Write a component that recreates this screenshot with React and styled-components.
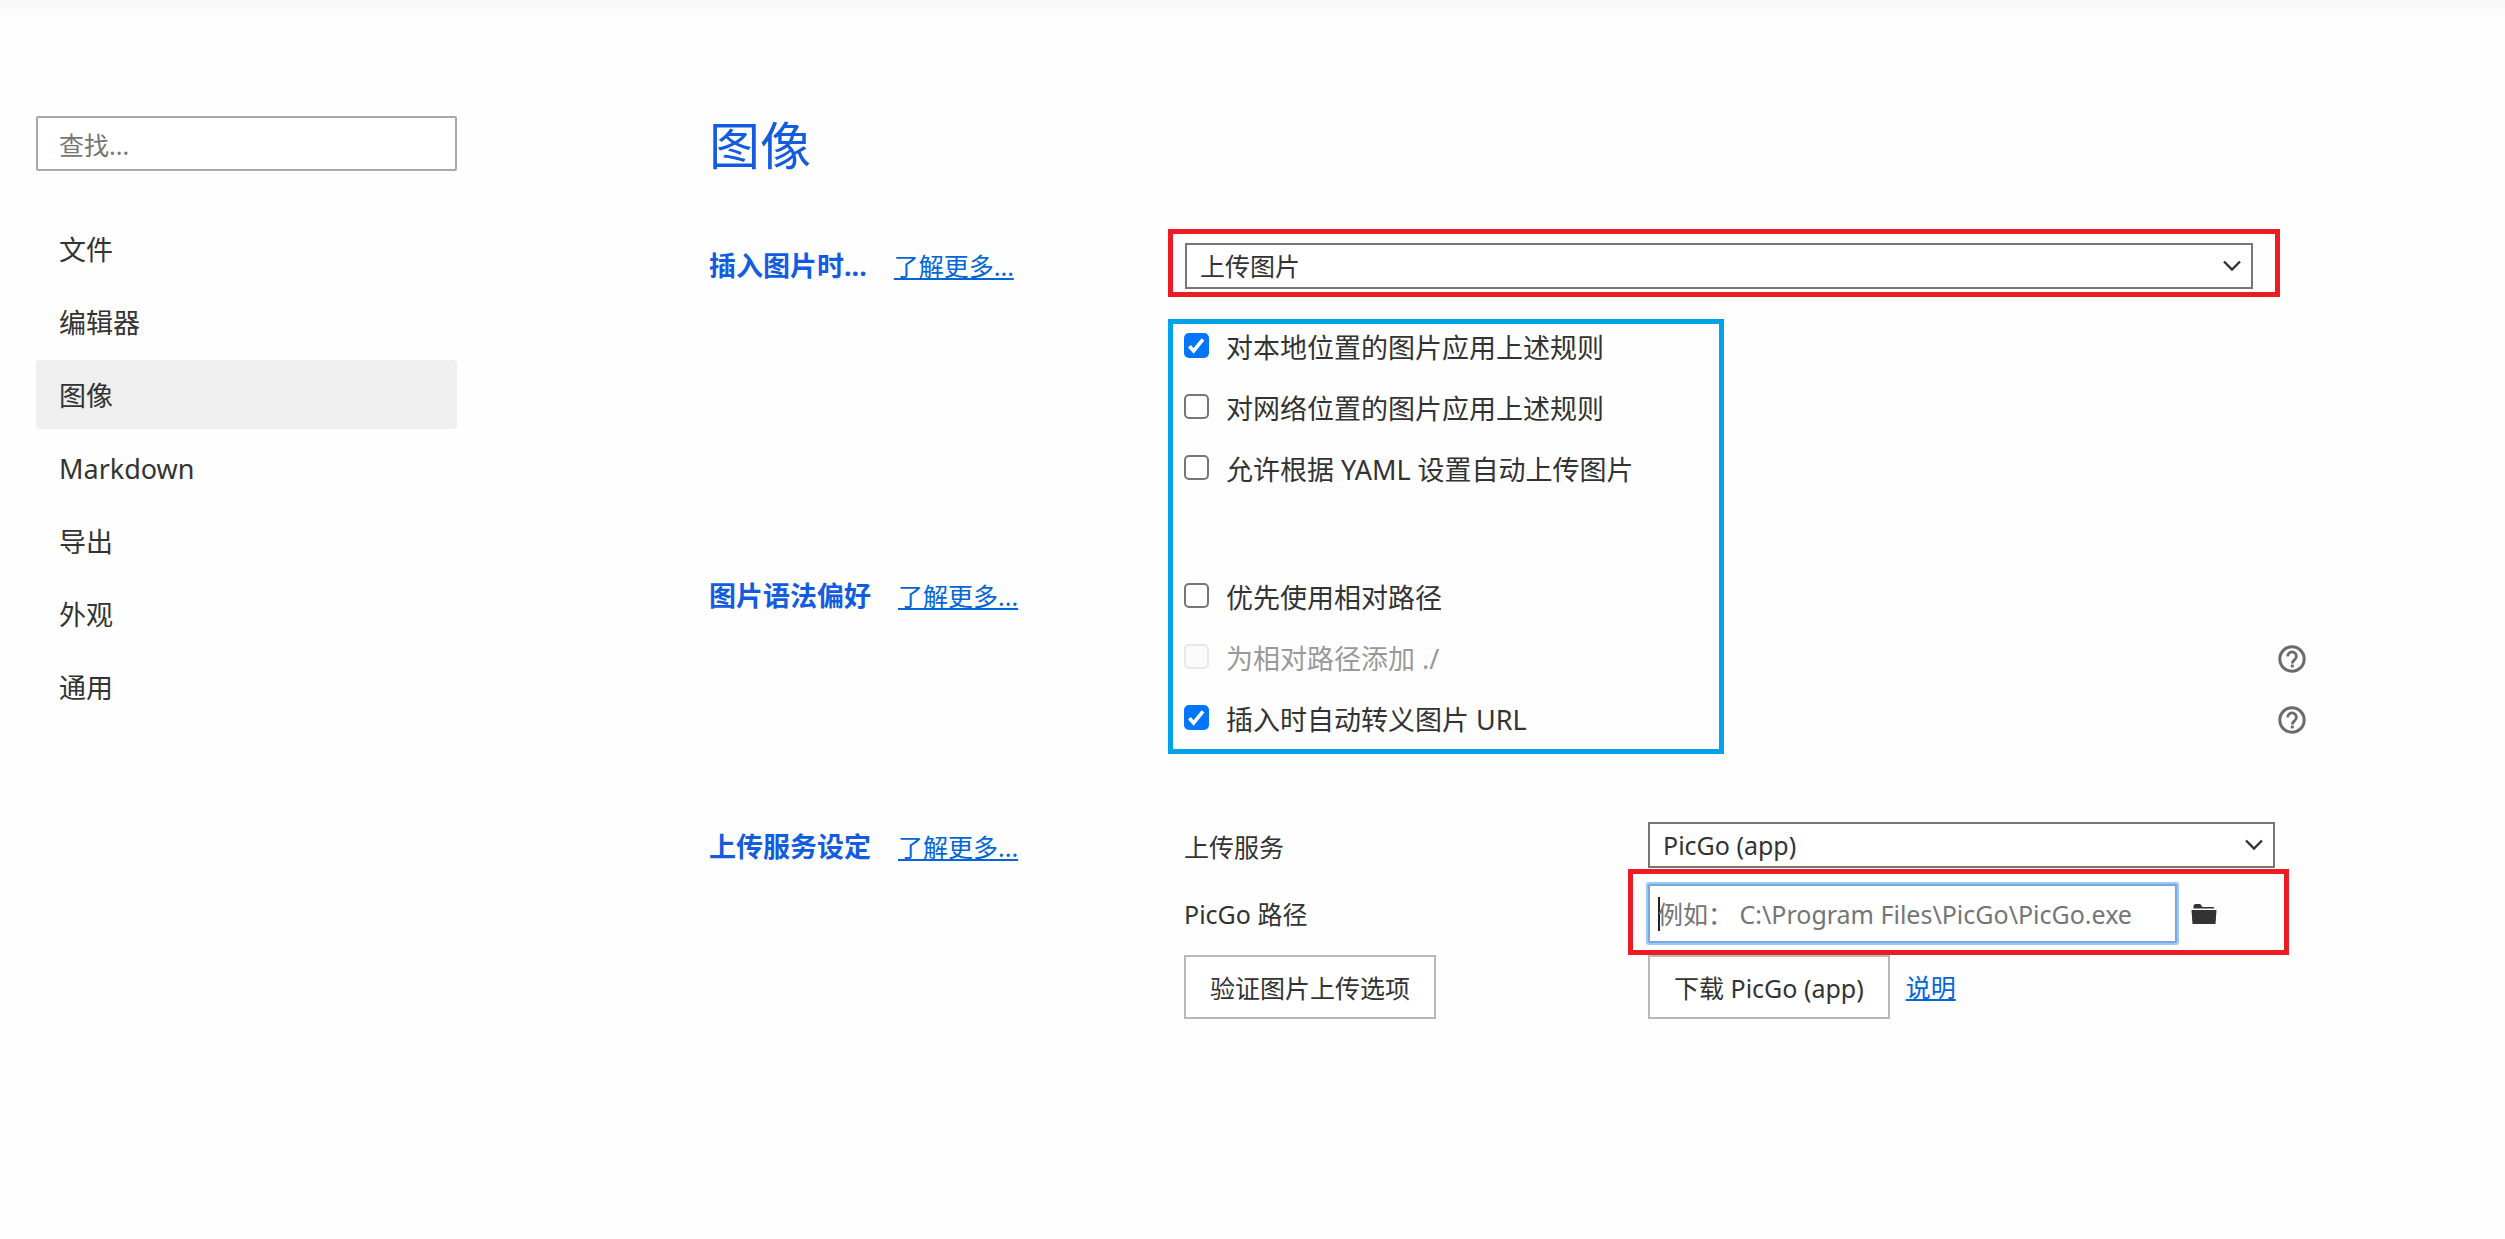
import React, { useState } from 'react';
import styled, { createGlobalStyle } from 'styled-components';

const GlobalStyle = createGlobalStyle`
  * {
    box-sizing: border-box;
  }
  body {
    margin: 0;
    background: #fefefe;
    color: #333;
    font-family: "Noto Sans", "Noto Sans CJK SC", sans-serif;
    font-size: 25px;
    line-height: 36px;
  }
  button, input, select {
    font: inherit;
    color: inherit;
    margin: 0;
  }
`;

// page layout
const Page = styled.div`
  display: flex;
  align-items: flex-start;
  padding: 0 199px 80px 36px;
  background: linear-gradient(#f8f8f8, #fefefe 24px);
`;
const Sidebar = styled.aside`
  flex: none;
  width: 421px;
  padding-top: 116px;
`;
const Main = styled.main`
  flex: 1;
  min-width: 0;
  margin-left: 252px;
  padding-top: 109px;
`;

// sidebar
const Search = styled.input`
  display: block;
  width: 100%;
  height: 55px;
  padding: 2px 21px 0;
  border: 2px solid #a9a9a9;
  border-radius: 2px;
  background: white;
  &::placeholder {
    color: #757575;
    opacity: 1;
  }
`;
const Nav = styled.nav`
  display: flex;
  flex-direction: column;
  gap: 4px;
  margin-top: 43px;
`;
const NavItem = styled.a`
  height: 69px;
  padding-left: 23px;
  border-radius: 4px;
  background: ${props => (props.$active ? '#efefef' : 'transparent')};
  color: #333;
  font-size: 27px;
  line-height: 71px;
  text-decoration: none;
`;

// settings grid
const Title = styled.h1`
  margin: 0;
  color: #135ce0;
  font-size: 51px;
  font-weight: 400;
  line-height: 72px;
`;
const Settings = styled.div`
  display: grid;
  grid-template-columns: 475px 1fr;
  margin-top: 48px;
`;
const Heading = styled.div`
  display: flex;
  align-items: center;
  gap: 27px;
  grid-column: 1;
  grid-row: ${props => props.$row};
  height: ${props => props.$height};
`;
const HeadingText = styled.h2`
  margin: 0;
  color: #135ce0;
  font-size: 27px;
  font-weight: 700;
`;
const Link = styled.a`
  color: #0366d6;
  text-decoration: underline;
  text-decoration-thickness: 2px;
  text-underline-offset: 2px;
`;
const Cell = styled.div`
  grid-column: 2;
  grid-row: ${props => props.$row};
`;
const Checks = styled(Cell)`
  display: flex;
  flex-direction: column;
  padding: ${props => props.$pad};
`;
const CheckRow = styled.div`
  display: flex;
  align-items: center;
  justify-content: space-between;
  height: 61px;
`;
const CheckLabel = styled.label`
  display: flex;
  align-items: center;
  gap: 17px;
  color: ${props => (props.$off ? '#999' : '#333')};
  font-size: 27px;
`;
const Box = styled.input`
  appearance: none;
  width: 25px;
  height: 25px;
  margin-bottom: 5px;
  border: 2px solid #767676;
  border-radius: 5px;
  background: white;
  &:checked {
    border-color: #0075ff;
    background: #0075ff url("data:image/svg+xml,%3Csvg xmlns='http://www.w3.org/2000/svg' viewBox='0 0 21 21'%3E%3Cpath d='M3.4 11.2 7.6 16 17 4.4' fill='none' stroke='white' stroke-width='3.6'/%3E%3C/svg%3E") center / 21px no-repeat;
  }
  &:disabled {
    border-color: #e8e8e8;
    background: #fafafa;
  }
`;
const Help = styled.button`
  display: flex;
  padding: 0;
  border: 0;
  background: none;
  color: #6b6b6b;
`;

// select with its own arrow drawn over the right end
const SelectWrap = styled.div`
  display: grid;
  align-items: center;
  margin-right: ${props => props.$right};
  & > * {
    grid-area: 1 / 1;
  }
  svg {
    justify-self: end;
    margin-right: 12px;
    pointer-events: none;
  }
`;
const Select = styled.select`
  appearance: none;
  width: 100%;
  height: 46px;
  padding: 0 40px 0 13px;
  border: 2px solid #767676;
  border-radius: 0;
  background: white;
`;

// highlight frames around the important fields
const Frame = styled.div`
  border: 5px solid #ed1c24;
`;
const TopFrame = styled(Frame)`
  height: 68px;
  margin: 0 26px 0 -16px;
  padding: 9px 22px 0 12px;
`;
const BlueFrame = styled.div`
  grid-column: 2;
  grid-row: 2 / 4;
  width: 556px;
  height: 435px;
  margin: 16px 0 0 -16px;
  border: 5px solid #00a2e8;
  pointer-events: none;
`;

// upload service block
const Upload = styled(Cell)`
  display: grid;
  grid-template-columns: 464px 1fr;
  grid-template-rows: 48px 86px 64px;
  align-items: center;
`;
const FieldLabel = styled.label`
  padding-top: 4px;
`;
const PathFrame = styled(Frame)`
  display: flex;
  align-items: center;
  gap: 14px;
  height: 86px;
  margin: 0 17px 0 -20px;
  padding: 3px 67px 0 15px;
`;
const PathInput = styled.input`
  flex: 1;
  min-width: 0;
  height: 59px;
  padding: 0 8px;
  border: 2px solid #7aa7dd;
  outline: 2px solid #99c8ff;
  border-radius: 1px;
  background: white;
  caret-color: transparent;
  &::placeholder {
    color: #757575;
    opacity: 1;
  }
  &:placeholder-shown {
    background: linear-gradient(#222, #222) 8px center / 2px 34px no-repeat white;
  }
  &:not(:placeholder-shown) {
    caret-color: #222;
  }
`;
const IconButton = styled.button`
  display: flex;
  padding: 0;
  border: 0;
  background: none;
`;
const Button = styled.button`
  justify-self: start;
  height: 64px;
  padding: 2px 24px 0;
  border: 2px solid #b8b8b8;
  background: white;
`;
const Actions = styled.div`
  display: flex;
  align-items: center;
  gap: 16px;
`;

const navItems = ['文件', '编辑器', '图像', 'Markdown', '导出', '外观', '通用'];

function Chevron() {
    return (
        <svg width="18" height="12" viewBox="0 0 18 12" fill="none" stroke="#333" strokeWidth="2.4" aria-hidden="true">
            <path d="M1 1.5 9 9.5 17 1.5" />
        </svg>
    );
}

function SectionHeading({ row, height, children }) {
    return (
        <Heading $row={row} $height={height}>
            <HeadingText>{children}</HeadingText>
            <Link href="#">了解更多...</Link>
        </Heading>
    );
}

function Check({ label, initial, disabled, help }) {
    const [on, setOn] = useState(Boolean(initial));

    return (
        <CheckRow>
            <CheckLabel $off={disabled}>
                <Box type="checkbox" checked={on} disabled={disabled} onChange={() => setOn(!on)} />
                {label}
            </CheckLabel>
            {help && (
                <Help type="button" aria-label="帮助">
                    <svg width="28" height="28" viewBox="0 0 28 28" fill="none" stroke="currentColor" aria-hidden="true">
                        <circle cx="14" cy="14" r="12.2" strokeWidth="3" />
                        <path d="M9.8 11.4a4.3 4.3 0 1 1 7 3.1c-1.6 1.400-2.500 2-2.500 4" strokeWidth="2.8" />
                        <path d="M14.3 19.600v2.800" strokeWidth="3" />
                    </svg>
                </Help>
            )}
        </CheckRow>
    );
}

function App() {
    const [active, setActive] = useState('图像');

    return (
        <Page>
            <GlobalStyle />
            <Sidebar>
                <Search type="text" placeholder="查找..." aria-label="查找" />
                <Nav>
                    {navItems.map(item => (
                        <NavItem key={item} href="#" $active={item === active} onClick={() => setActive(item)}>
                            {item}
                        </NavItem>
                    ))}
                </Nav>
            </Sidebar>
            <Main>
                <Title>图像</Title>
                <Settings>
                    <SectionHeading row={1} height="74px">插入图片时...</SectionHeading>
                    <Cell $row={1}>
                        <TopFrame>
                            <SelectWrap $right="0">
                                <Select aria-label="插入图片时">
                                    <option>上传图片</option>
                                </Select>
                                <Chevron />
                            </SelectWrap>
                        </TopFrame>
                    </Cell>
                    <Checks $row={2} $pad="14px 0 67px">
                        <Check label="对本地位置的图片应用上述规则" initial />
                        <Check label="对网络位置的图片应用上述规则" />
                        <Check label="允许根据 YAML 设置自动上传图片" />
                    </Checks>
                    <SectionHeading row={3} height="58px">图片语法偏好</SectionHeading>
                    <Checks $row={3} $pad="0 0 71px">
                        <Check label="优先使用相对路径" />
                        <Check label="为相对路径添加 ./" disabled help />
                        <Check label="插入时自动转义图片 URL" initial help />
                    </Checks>
                    <BlueFrame />
                    <SectionHeading row={4} height="52px">上传服务设定</SectionHeading>
                    <Upload $row={4}>
                        <FieldLabel htmlFor="service">上传服务</FieldLabel>
                        <SelectWrap $right="31px">
                            <Select id="service">
                                <option>PicGo (app)</option>
                            </Select>
                            <Chevron />
                        </SelectWrap>
                        <FieldLabel htmlFor="path">PicGo 路径</FieldLabel>
                        <PathFrame>
                            <PathInput id="path" type="text" autoFocus placeholder="例如： C:\Program Files\PicGo\PicGo.exe" />
                            <IconButton type="button" aria-label="选择路径">
                                <svg width="26" height="22" viewBox="0 0 26 22" fill="#333" aria-hidden="true">
                                    <path d="M2.500 5.500V3Q3 1 4.500 1H8.500q1 0 1.500 1l1.500 2H22q1.500 0 1.500 1.500z" />
                                    <path d="M.5 7h25L24.500 21h-23z" />
                                </svg>
                            </IconButton>
                        </PathFrame>
                        <Button type="button">验证图片上传选项</Button>
                        <Actions>
                            <Button type="button">下载 PicGo (app)</Button>
                            <Link href="#">说明</Link>
                        </Actions>
                    </Upload>
                </Settings>
            </Main>
        </Page>
    );
}

export default App;
